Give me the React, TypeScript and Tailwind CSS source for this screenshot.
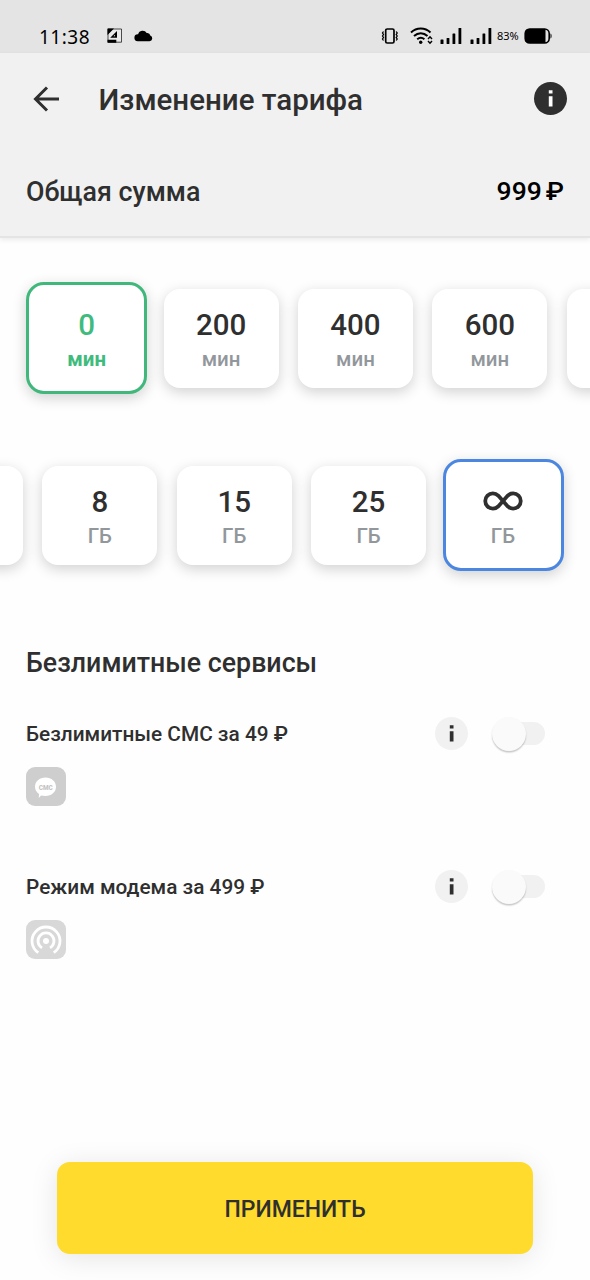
import clsx from "clsx";

type Option = { value: string; selected?: boolean };

const minutes: Option[] = [
  { value: "0", selected: true },
  { value: "200" },
  { value: "400" },
  { value: "600" },
  { value: "" },
];

const traffic: Option[] = [
  { value: "" },
  { value: "8" },
  { value: "15" },
  { value: "25" },
  { value: "∞", selected: true },
];

function InfinityIcon() {
  return (
    <svg className="-mt-[2px]" width="40" height="20" viewBox="0 0 40 20" fill="none" stroke="#2f2f2f" strokeWidth="3.8">
      <path d="M20 10L15.200 4.600A7.600 7.600 0 1 0 15.200 15.400L24.800 4.600A7.600 7.600 0 1 1 24.800 15.400z" strokeLinejoin="round" />
    </svg>
  );
}

function StatusBar() {
  return (
    <div className="flex h-[53px] shrink-0 items-start justify-between bg-[#e4e4e4] pt-6 pr-[37px] pl-[39px] text-black">
      <div className="flex h-6 items-center">
        <span className="w-[53px] pt-px font-['Noto_Sans'] text-[19px] leading-6 tracking-[0.5px] whitespace-nowrap">11:38</span>
        <svg className="ml-[15px]" width="16" height="16" viewBox="0 0 16 16">
          <path d="M1 1h13.5v13.2H1z" fill="#e9e9e9" stroke="#222" strokeWidth="0.8" />
          <path d="M.5.5h6.500L.5 7zM.5 11.800h8.800v2.900H.5z" />
          <path d="M10 3v6.800H3.200zM8 6.800v1.500H6.500z" fillRule="evenodd" />
        </svg>
        <svg className="ml-[11px]" width="19" height="12" viewBox="0 0 19 12">
          <path d="M3.7 11.3h11.8a3 3 0 0 0 .8-5.8A3.2 3.2 0 0 0 12.700 3 4.700 4.700 0 0 0 4.100 4.300a3.500 3.500 0 0 0-.4 7z" />
        </svg>
      </div>
      <div className="flex h-6 items-center">
        <svg width="18" height="18" viewBox="0 0 18 18" fill="none" stroke="#000">
          <rect x="4.700" y="2" width="8.300" height="14" rx="1.500" strokeWidth="1.700" />
          <path d="M2.500 4.500L1.500 6l1 1.500-1 1.500 1 1.500-1 1.500 1 1.500M15.200 4.500l1 1.500-1 1.500 1 1.500-1 1.500 1 1.500-1 1.500" strokeWidth="1.300" />
        </svg>
        <svg className="ml-[11px]" width="24" height="18" viewBox="0 0 24 18" fill="none" stroke="#000" strokeWidth="2">
          <path d="M1 5.500c5.500-5.300 14-5.300 19.500 0M4 9c4-3.700 9.500-3.700 13.500 0M7.200 12.200c2.300-1.900 5-1.900 7.200 0" />
          <circle cx="10.700" cy="15.200" r="1.700" fill="#000" stroke="none" />
          <path d="M18 12l2-2.300 2 2.300M18 14l2 2.300 2-2.300" strokeWidth="1.400" />
        </svg>
        <Signal className="ml-[6px]" />
        <Signal className="ml-[8px]" />
        <span className="ml-[5px] w-[23px] font-['Noto_Sans'] text-[11px] leading-6 tracking-[-0.1px]">83%</span>
        <svg className="ml-[4px]" width="29" height="18" viewBox="0 0 29 18">
          <rect x="1.200" y="2" width="24" height="14" rx="4.500" fill="none" stroke="#000" strokeWidth="1.600" />
          <path d="M5 2h16.500v14H5a4 4 0 0 1-4-4V6a4 4 0 0 1 4-4z" />
          <path d="M26.500 6.500c1.400.3 1.400 4.700 0 5z" />
        </svg>
      </div>
    </div>
  );
}

function Signal({ className }: { className?: string }) {
  return (
    <svg className={className} width="22" height="18" viewBox="0 0 22 18">
      <rect x="0.500" y="12.500" width="3" height="4.500" rx="0.500" />
      <rect x="6.600" y="11" width="2.800" height="6" rx="0.500" />
      <rect x="12.500" y="6.500" width="2.800" height="10.500" rx="0.500" />
      <rect x="18.500" y="1" width="2.800" height="16" rx="0.500" />
    </svg>
  );
}

function OptionCard({ option, unit, accent }: { option: Option; unit: string; accent: "green" | "blue" }) {
  const green = option.selected && accent === "green";

  return (
    <div className="flex w-[134.4px] shrink-0 items-center justify-center">
      <div
        className={clsx(
          "flex flex-col items-center justify-center bg-white pt-[4px] shadow-[0_4px_14px_rgba(0,0,0,0.18)]",
          option.selected ? "h-[112px] w-[121px] rounded-[18px] border-[3px]" : "h-[99px] w-[115px] rounded-[16px]",
          option.selected && (green ? "border-[#40b87b]" : "border-[#4b87e0]"),
          green ? "text-[#3fbb7d]" : "text-[#2f2f2f]"
        )}
      >
        {option.value && (
          <>
            <div className="flex h-[38px] items-center text-[29.5px] leading-[38px] font-medium">
              {option.value === "∞" ? <InfinityIcon /> : option.value}
            </div>
            <div className={clsx("h-[30px] text-[20.5px] leading-[30px]", green ? "font-bold" : "font-medium text-[#92979c]")}>
              {unit}
            </div>
          </>
        )}
      </div>
    </div>
  );
}

function InfoGlyph() {
  return (
    <svg width="33" height="33" viewBox="0 0 33 33" fill="currentColor">
      <path d="M14.800 8.300h3.700v3.200h-3.700zM14.800 14.300h3.700v10.200h-3.700z" />
    </svg>
  );
}

function Service({ title, icon }: { title: string; icon: React.ReactNode }) {
  return (
    <div className="h-[153px] pr-[45px] pl-[26px]">
      <div className="flex h-[35px] items-center">
        <div className="flex-1 pt-[3px] text-[20.8px] font-medium whitespace-nowrap">{title}</div>
        <div className="flex size-[33px] items-center justify-center rounded-full bg-[#f1f1f1]">
          <InfoGlyph />
        </div>
        <div className="ml-[24px] flex w-[53px] items-center">
          <div className="z-10 size-[34px] shrink-0 rounded-full bg-[#fafafa] shadow-[0_1.5px_1.5px_rgba(0,0,0,0.22)]" />
          <div className="-ml-[20px] h-[23px] w-[39px] shrink-0 rounded-full bg-[#f1f1f1]" />
        </div>
      </div>
      <div className="mt-[16px] size-[40px]">{icon}</div>
    </div>
  );
}

function SmsIcon() {
  return (
    <div className="flex h-[39px] w-[40px] items-center justify-center rounded-[9px] bg-[#cecece]">
      <svg width="40" height="40" viewBox="0 0 40 40">
        <path d="M19.500 10.500c6 0 10.500 4 10.500 9.300s-4.500 9.200-10.500 9.200c-1.700 0-3.200-.2-4.500-.5L12.800 31l.2-4c-2.500-1.700-4-4.200-4-7.200 0-5.300 4.500-9.300 10.500-9.300z" fill="#fff" />
        <text x="19.800" y="22.900" textAnchor="middle" fontFamily="Roboto" fontWeight="900" fontSize="7.500" textLength="14" lengthAdjust="spacingAndGlyphs" fill="#c4c4c4">СМС</text>
      </svg>
    </div>
  );
}

function ModemIcon() {
  return (
    <div className="flex h-[39px] w-[40px] items-center justify-center rounded-[9px] bg-[#d8d8d8]">
      <svg width="40" height="40" viewBox="0 0 40 40" fill="none" stroke="#fff" strokeWidth="2.800">
        <circle cx="20" cy="21" r="3" fill="#fff" stroke="none" />
        <path d="M16 27.900a8 8 0 1 1 8 0" />
        <path d="M12.300 32.700a14 14 0 1 1 15.400 0" />
      </svg>
    </div>
  );
}

export default function App() {
  return (
    <div className="flex h-[1280px] w-[590px] flex-col overflow-hidden bg-[#fefefe] font-['Roboto',sans-serif] text-[#2f2f2f]">
      <StatusBar />

      {/* Header */}
      <header className="z-10 h-[185px] shrink-0 border-b-2 border-[#e4e4e4] bg-[#f1f1f1] shadow-[0_2px_5px_rgba(0,0,0,0.08)]">
        <div className="flex h-[91px] items-center pr-[23px] pl-[33px]">
          <svg width="27" height="26" viewBox="0 0 27 26" fill="none" stroke="#2f2f2f" strokeWidth="3">
            <path d="M26 13H2.500M14 1.500L2.500 13 14 24.500" />
          </svg>
          <h1 className="ml-[38.500px] flex-1 pt-[3px] text-[29.5px] font-medium whitespace-nowrap">Изменение тарифа</h1>
          <div className="flex size-[33px] items-center justify-center rounded-full bg-[#2f2f2f] text-white">
            <InfoGlyph />
          </div>
        </div>
        <div className="flex h-[94px] items-center justify-between pr-[26px] pl-[26px] text-[26.8px] font-medium">
          <div className="pt-[3px]">Общая сумма</div>
          <div className="flex gap-[4px] text-[26.5px] text-black">
            <span>999</span>
            <span>₽</span>
          </div>
        </div>
      </header>

      {/* Minutes */}
      <div className="mt-[24px] flex h-[152px] shrink-0 items-center overflow-hidden pl-[19.500px]">
        {minutes.map((option, i) => (
          <OptionCard key={i} option={option} unit="мин" accent="green" />
        ))}
      </div>

      {/* Gigabytes */}
      <div className="mt-[25px] flex h-[152px] shrink-0 items-center justify-end overflow-hidden pr-[19.800px]">
        {traffic.map((option, i) => (
          <OptionCard key={i} option={option} unit="ГБ" accent="blue" />
        ))}
      </div>

      {/* Services */}
      <h2 className="mt-[52px] mb-[33px] ml-[26px] h-[40px] text-[26.75px] leading-[40px] font-medium">Безлимитные сервисы</h2>
      <Service title="Безлимитные СМС за 49 ₽" icon={<SmsIcon />} />
      <Service title="Режим модема за 499 ₽" icon={<ModemIcon />} />

      <button className="mx-[57px] mt-auto mb-[26px] h-[92px] shrink-0 rounded-[13px] bg-[#fedb2d] pt-[4px] text-[23px] font-medium shadow-[0_4px_28px_rgba(0,0,0,0.1)]">
        ПРИМЕНИТЬ
      </button>
    </div>
  );
}
